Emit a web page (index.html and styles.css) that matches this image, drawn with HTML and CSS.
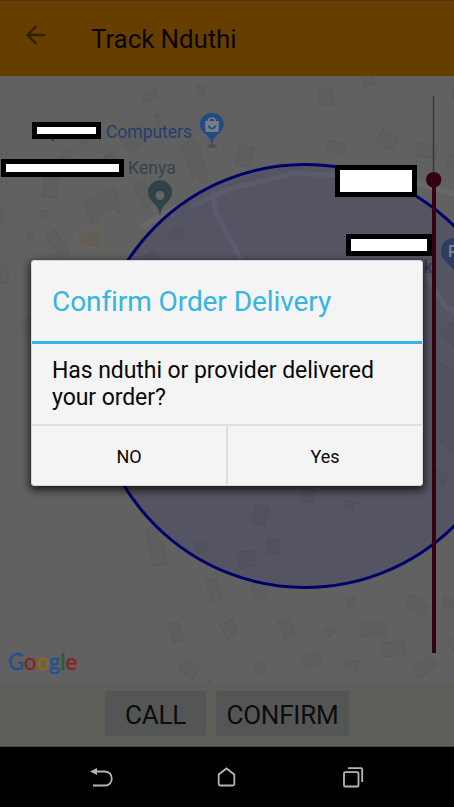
FILE: index.html
```html
<!DOCTYPE html>
<html lang="en">
<head>
<meta charset="utf-8">
<title>Track Nduthi</title>
<link rel="stylesheet" href="styles.css">
</head>
<body>
<div class="screen">
  <header class="toolbar">
    <svg class="back" width="22" height="22" viewBox="0 0 22 22"><path d="M20.500 11H2.500M11.500 1.800L2.300 11l9.200 9.200"/></svg>
    <h1 class="toolbar-title">Track Nduthi</h1>
  </header>
  <main class="map">
    <svg class="map-canvas" width="454" height="607" viewBox="0 76 454 607">
      <g class="building">
        <path d="M197 85h8v9h-8zM142 95l13-6 3 7-13 7zM362 76l2 10 11-2-3-8zM318 90l13-2 3 16-13 2zM453 88h4v12h-4z"/>
        <path d="M154 115l5-1 5 15-5 1zM60 158l10-9 3 5-9 7zM119 139l23-17 7 10-5 4 3 3-16 13zM101 160l10-6 2 4-9 6zM77 142l9-3 2 3-6 1zM104 157l9-5 3 5z"/>
        <path d="M180 145l14-6 14 33-4 2 4 7-6 3-5-9-5 2zM239 144l15 4-4 19-15-3zM329 140l17 5-2 8-17-4zM383 129l16 9-8 12-16-9zM418 142l20 4-3 13-19-4zM449 153l9 5v13l-12-6z"/>
        <path d="M44 177l15 1-3 20-14-1zM84 201l31-13 5 18-3 1 3 5-3 1-2-6-18 8 2 6-7 3zM134 189l10-8 9 19-6 10zM41 210l7 1-2 8-7-1zM27 233l5-1 1 7-5 2zM45 236l10-6 15 22-9 6zM0 209l4 2-2 13H0zM0 265l6-1 3 18-9 2zM276 165l7-3 2 9-7 4z"/>
        <path d="M145 529l12-2 2 16 5-1 3 22-14 2zM251 583l12-6 5 20-13 4zM206 581l10-3 7 20-11 4zM347 600l7-3 2 8-7 3zM411 594l18 11-6 10-18-11zM444 595l10 4-2 10-10-4zM167 625l11-3 6 18-10 3zM220 625l12-6 6 14-11 7zM278 621l12-3 6 16-12 5zM324 630l6-4 6 5-7 6zM361 623h26v14h-26zM380 643l25-2 1 14-24 2zM446 640l10-5v18z"/>
        <path d="M189 657l11 12-8 11-14-12zM255 663h10v10h-10zM301 661l14-10 7 9-14 10zM346 660l13 1-2 9-12-2zM412 669l19-12 7 8-19 14zM206 683l4-3 3 3zM20 322l13-5v17l-7 3z"/>
      </g>
      <path class="poi-area" d="M81 231l21-1v18l-21-1v-4l-5-2 1-7h4z"/>
      <path class="road" d="M143 226l18-10 29-16 40-14 65-12 45 3 64 2 55 16"/>
      <circle class="zone-fill" cx="305" cy="376" r="211.5"/>
      <g class="zone-roads"><path d="M190 207l40-18 65-16 50 3"/><path d="M213 191l2 20 30 56"/><path d="M424 270l20 35 14 9"/></g>
      <g class="zone-blocks"><path d="M168 235l9-10 9 7-9 11zM142 258l10-7 6 4v8zM267 540h12v14h-12zM238 552l16-2 2 15-16 4zM303 488l12 2-2 13-13-2zM256 505l13 3-5 18-12-3zM345 500l9 2-1 7-9-2zM196 543l10-2 2 10-11 3zM440 332l9-8h8v20l-3 3zM432 375l7-14 17 13v80l-20-16zM439 468l9 8-5 9-10-8z"/></g>
      <circle class="zone-ring" cx="305" cy="376" r="211.5"/>
      <g class="labels">
        <text class="shop" x="50" y="137">y</text>
        <text class="shop" x="106" y="137.500" textLength="86" lengthAdjust="spacingAndGlyphs">Computers</text>
        <text class="place" x="128" y="173.500" textLength="48" lengthAdjust="spacingAndGlyphs">Kenya</text>
        <text class="park" x="433" y="273" text-anchor="end">Park</text>
      </g>
      <ellipse class="pin-shadow" cx="212" cy="146" rx="5" ry="2"/>
      <path class="pin-shop" d="M211.800 146l-1-5c-2-7-11-8-11-16.500a12 11.800 0 0 1 24 0c0 8.500-9 9.500-11 16.500z"/>
      <path class="bag" d="M205 121h14l-.500 11h-13z"/>
      <path class="bag-handle" d="M208.500 122v-1a3.300 3 0 0 1 6.600 0v1"/>
      <path class="bag-smile" d="M208.500 125.500c1 4 6 4 7 0"/>
      <path class="pin-place" d="M160 216l-1-5c-2-7-11-10-11-19a12 11.800 0 0 1 24 0c0 9-9 12-11 19z"/>
      <circle class="pin-hole" cx="160" cy="195.500" r="4.500"/>
      <path class="pin-parking" d="M455 273c-2-8-14-11-14-22a13 13 0 0 1 26 0c0 11-10 14-12 22z"/>
      <text class="parking-letter" x="448" y="256.500">P</text>
      <path class="redaction" d="M34.500 124.500h64v12h-64zM3.500 161.500h118v13h-118zM337.500 167.500h77v27h-77zM348.500 236.500h81v17h-81z"/>
      <path class="route-ahead" d="M433.500 96v84"/>
      <path class="route" d="M434 180v473"/>
      <circle class="route-dot" cx="433.700" cy="179.700" r="7.700"/>
      <text class="google" x="8" y="669.500" textLength="69" lengthAdjust="spacingAndGlyphs"><tspan class="g-blue">G</tspan><tspan class="g-red">o</tspan><tspan class="g-yellow">o</tspan><tspan class="g-blue">g</tspan><tspan class="g-green">l</tspan><tspan class="g-red">e</tspan></text>
    </svg>
  </main>
  <div class="actions">
    <button class="action call">CALL</button>
    <button class="action confirm">CONFIRM</button>
  </div>
  <nav class="navbar">
    <svg width="24" height="24" viewBox="0 0 24 24"><path d="M6 5.500h9c9 0 9 14 0 14H3"/><path class="solid" d="M0 5.500L7 2v7z"/></svg>
    <svg width="24" height="24" viewBox="0 0 24 24"><path d="M3.700 8.500L11.500 2.500l7.800 6V18a1.500 1.500 0 0 1-1.500 1.500H5.200A1.500 1.500 0 0 1 3.700 18z"/></svg>
    <svg width="24" height="24" viewBox="0 0 24 24"><rect x="4" y="6.200" width="14.500" height="14.300" rx="1.300"/><path d="M8 2.200h13.200a1 1 0 0 1 1 1V16"/></svg>
  </nav>
</div>
<div class="overlay">
  <section class="dialog">
    <h2 class="dialog-title">Confirm Order Delivery</h2>
    <p class="dialog-message">Has nduthi or provider delivered<br>your order?</p>
    <div class="dialog-buttons">
      <button>NO</button>
      <button>Yes</button>
    </div>
  </section>
</div>
</body>
</html>
```
FILE: styles.css
```css
* { box-sizing: border-box; }
body { margin: 0; width: 454px; height: 807px; overflow: hidden; font-family: Roboto, sans-serif; background: #000; }
button { border: 0; padding: 0; font-family: inherit; }
h1, h2, p { margin: 0; font-weight: 400; }

.screen { display: flex; flex-direction: column; height: 807px; }
.toolbar { flex: 0 0 76px; display: flex; align-items: center; padding: 0 0 0 25px; background: #663f00; border-top: 1px solid #4c340c; }
.back { margin: -7px 0 0; fill: none; stroke: #332000; stroke-width: 2.4; }
.toolbar-title { margin-left: 44px; font-size: 26px; line-height: 30px; letter-spacing: -.12px; color: #0b0700; }

.map { flex: 0 0 607px; background: #616161; }
.map-canvas { display: block; }
.building { fill: #5e5e5e; stroke: #585858; stroke-width: .6; }
.poi-area { fill: #625f59; stroke: #75664b; }
.road { fill: none; stroke: #686868; stroke-width: 6; stroke-linecap: round; stroke-linejoin: round; }
.zone-fill { fill: #545463; }
.zone-roads { fill: none; stroke: #5b5b6b; stroke-width: 5; stroke-linejoin: round; }
.zone-blocks { fill: #51515f; stroke: #4c4c5b; stroke-width: .6; }
.zone-ring { fill: none; stroke: #00006a; stroke-width: 3; }
.labels { font-size: 18px; }
.shop { fill: #233f69; }
.place { fill: #36424a; }
.park { fill: #343a50; }
.pin-shadow { fill: #505050; }
.pin-shop { fill: #234b82; }
.bag { fill: #777d86; }
.bag-handle { fill: none; stroke: #777d86; stroke-width: 1.7; }
.bag-smile { fill: none; stroke: #234b82; stroke-width: 1.5; }
.pin-place { fill: #304147; }
.pin-hole { fill: #656565; }
.pin-parking { fill: #303b62; }
.parking-letter { fill: #7d8191; font-size: 16px; font-weight: 500; }
.redaction { fill: #fff; stroke: #000; stroke-width: 5; }
.route-ahead { stroke: #393939; stroke-width: 1.5; }
.route { stroke: #360010; stroke-width: 4; }
.route-dot { fill: #360010; }
.google { font: 400 23px Lato, sans-serif; stroke-width: .6; }
.g-blue { fill: #284f8f; stroke: #284f8f; }
.g-red { fill: #87251f; stroke: #87251f; }
.g-yellow { fill: #8c6c08; stroke: #8c6c08; }
.g-green { fill: #1c632e; stroke: #1c632e; }

.actions { flex: 0 0 64px; display: flex; align-items: flex-start; justify-content: center; gap: 10px; padding-top: 8px; background: #5f5f59; border-bottom: 1px solid #464642; }
.action { height: 45px; border-radius: 2px; background: #545656; color: #0d0d0d; font-size: 26px; line-height: 47px; letter-spacing: -.2px; padding-top: 1px; }
.call { width: 101px; }
.confirm { width: 133px; }

.navbar { flex: 1; display: flex; justify-content: space-between; padding: 19px 90px 0; background: #000; }
.navbar svg { fill: none; stroke: #b5b5b5; stroke-width: 1.8; }
.navbar .solid { fill: #b5b5b5; stroke: none; }

.overlay { position: absolute; inset: 0; padding: 260px 31px 0; }
.dialog { width: 392px; height: 226px; background: #f4f4f4; border: 1px solid #d7d7d7; border-radius: 3px; box-shadow: 0 3px 8px 1px rgba(0, 0, 0, .75); overflow: hidden; }
.dialog-title { height: 83px; padding: 24px 20px 0; border-bottom: 3px solid #36b4e4; color: #36b4e4; font-size: 28px; line-height: 33px; letter-spacing: -.08px; white-space: nowrap; }
.dialog-message { height: 82px; padding: 13px 20px 0; border-bottom: 2px solid #dfdfdf; color: #080808; font-size: 23px; line-height: 27px; letter-spacing: -.07px; white-space: nowrap; }
.dialog-buttons { display: grid; grid-template-columns: 196px 1fr; height: 59px; }
.dialog-buttons button { background: transparent; color: #080808; font-size: 18px; letter-spacing: -.1px; padding-top: 1px; }
.dialog-buttons button:first-child { border-right: 2px solid #dfdfdf; }
```
